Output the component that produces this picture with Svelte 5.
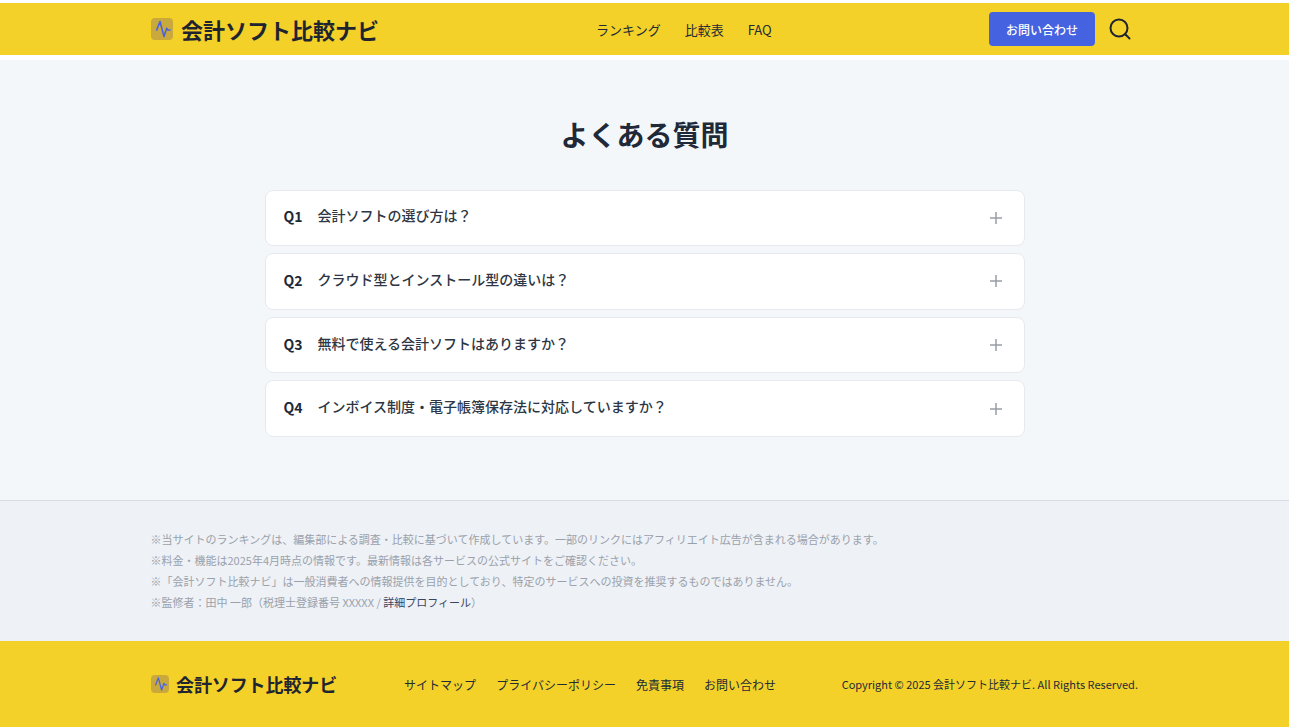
<script>
  const nav = ['ランキング', '比較表', 'FAQ'];
  const faqs = [
    ['Q1', '会計ソフトの選び方は？'],
    ['Q2', 'クラウド型とインストール型の違いは？'],
    ['Q3', '無料で使える会計ソフトはありますか？'],
    ['Q4', 'インボイス制度・電子帳簿保存法に対応していますか？']
  ];
  const links = ['サイトマップ', 'プライバシーポリシー', '免責事項', 'お問い合わせ'];
</script>

{#snippet logo(cls)}
  <span class="logo {cls}">
    <span class="mark">
      <svg viewBox="0 0 22 22" fill="none" stroke="#4763e4" stroke-width="1.600" stroke-linecap="round" stroke-linejoin="round"><path d="M5.700 12 9 3.500l4 15 2.700-8.200L17 12h2"/></svg>
    </span>
    <span class="name">会計ソフト比較ナビ</span>
  </span>
{/snippet}

<div class="page">
  <header>
    <div class="wrap head">
      {@render logo('big')}
      <nav>
        {#each nav as n}<a href="#top">{n}</a>{/each}
      </nav>
      <div class="actions">
        <button class="contact">お問い合わせ</button>
        <svg class="search" viewBox="0 0 24 24" fill="none" stroke="#1f2530" stroke-width="2" stroke-linecap="round"><circle cx="11" cy="11" r="8.500"/><path d="M17.500 17.500 21.500 21.500"/></svg>
      </div>
    </div>
  </header>

  <main>
    <h1>よくある質問</h1>
    <div class="faq">
      {#each faqs as [q, text]}
        <div class="item">
          <span class="q">{q}</span>
          <span class="text">{text}</span>
          <svg class="plus" viewBox="0 0 14 14" stroke="#999ea6" stroke-width="1.500"><path d="M7 1v12M1 7h12"/></svg>
        </div>
      {/each}
    </div>
  </main>

  <section class="notes">
    <div class="wrap">
      <p>※当サイトのランキングは、編集部による調査・比較に基づいて作成しています。一部のリンクにはアフィリエイト広告が含まれる場合があります。</p>
      <p>※料金・機能は2025年4月時点の情報です。最新情報は各サービスの公式サイトをご確認ください。</p>
      <p>※「会計ソフト比較ナビ」は一般消費者への情報提供を目的としており、特定のサービスへの投資を推奨するものではありません。</p>
      <p>※監修者：田中 一郎（税理士登録番号 XXXXX / <a href="#top">詳細プロフィール</a>）</p>
    </div>
  </section>

  <footer>
    <div class="wrap foot">
      {@render logo('small')}
      <div class="links">
        {#each links as l}<a href="#top">{l}</a>{/each}
      </div>
      <div class="copy">Copyright © 2025 会計ソフト比較ナビ. All Rights Reserved.</div>
    </div>
  </footer>
</div>

<style>
  :global(body) {
    margin: 0;
    background: #fff;
    font-family: "Noto Sans CJK JP", "Noto Sans", sans-serif;
    color: #1f2937;
  }
  .page { padding-top: 3px; width: 1289px; }
  .wrap { width: 988px; margin: 0 auto; box-sizing: border-box; }
  a { color: inherit; text-decoration: none; }
  header { background: #f4d128; height: 52px; margin-bottom: 5px; }
  .head { display: flex; align-items: center; height: 100%; position: relative; left: .5px; }
  .logo { display: inline-flex; align-items: center; font-weight: 700; color: #1f2530; }
  .mark { display: flex; align-items: center; justify-content: center; background: #c9a93c; border-radius: 4px; flex: none; }
  .mark svg { display: block; }
  .big .mark { width: 22px; height: 22px; margin-right: 8px; }
  .big .mark svg { width: 22px; height: 22px; }
  .big .name { font-size: 22px; line-height: 30px; padding-bottom: 1px; }
  .small .mark { width: 18px; height: 18px; margin-right: 7px; }
  .small .mark svg { width: 18px; height: 18px; }
  .small .name { font-size: 18px; line-height: 26px; letter-spacing: -0.1px; }
  nav { display: flex; gap: 24px; font-size: 13px; margin-left: 217px; color: #232a36; }
  .actions { margin-left: auto; display: flex; align-items: center; gap: 13px; margin-right: 7px; }
  .contact { width: 106px; height: 34px; background: #4563e0; color: #fff; border: 0; border-radius: 4px; font: 500 12px "Noto Sans CJK JP", sans-serif; padding: 0; }
  .search { width: 24px; height: 24px; }
  main { background: #f4f7fa; height: 440px; box-sizing: border-box; padding-top: 52px; }
  h1 { margin: 0 0 33.500px; font-size: 28px; line-height: 44px; font-weight: 700; text-align: center; color: #1f2937; }
  .faq { width: 760px; margin: 0 auto; display: flex; flex-direction: column; gap: 7px; }
  .item { display: flex; align-items: center; height: 56.670px; box-sizing: border-box; background: #fff; border: 1px solid #e6e9ee; border-radius: 8px; padding: 0 21px 0 18px; font-size: 14px; }
  .q { font-weight: 700; font-size: 14px; width: 34px; position: relative; top: -1.500px; }
  .text { flex: 1; font-weight: 500; color: #2d3644; position: relative; top: -2.500px; }
  .plus { width: 14px; height: 14px; }
  .notes { background: #eef1f6; border-top: 1px solid #d8dce2; height: 141px; box-sizing: border-box; padding-top: 28px; font-size: 11px; color: #9aa1ab; }
  .notes p { margin: 0; line-height: 21px; }
  .notes a { color: #3a4560; }
  footer { background: #f4d128; height: 86px; }
  .foot { display: flex; align-items: center; height: 100%; position: relative; left: .5px; }
  .links { display: flex; gap: 20px; margin-left: 67px; font-size: 12px; color: #232a36; }
  .copy { margin-left: auto; margin-right: 1px; font-size: 11px; color: #232a36; }
</style>
